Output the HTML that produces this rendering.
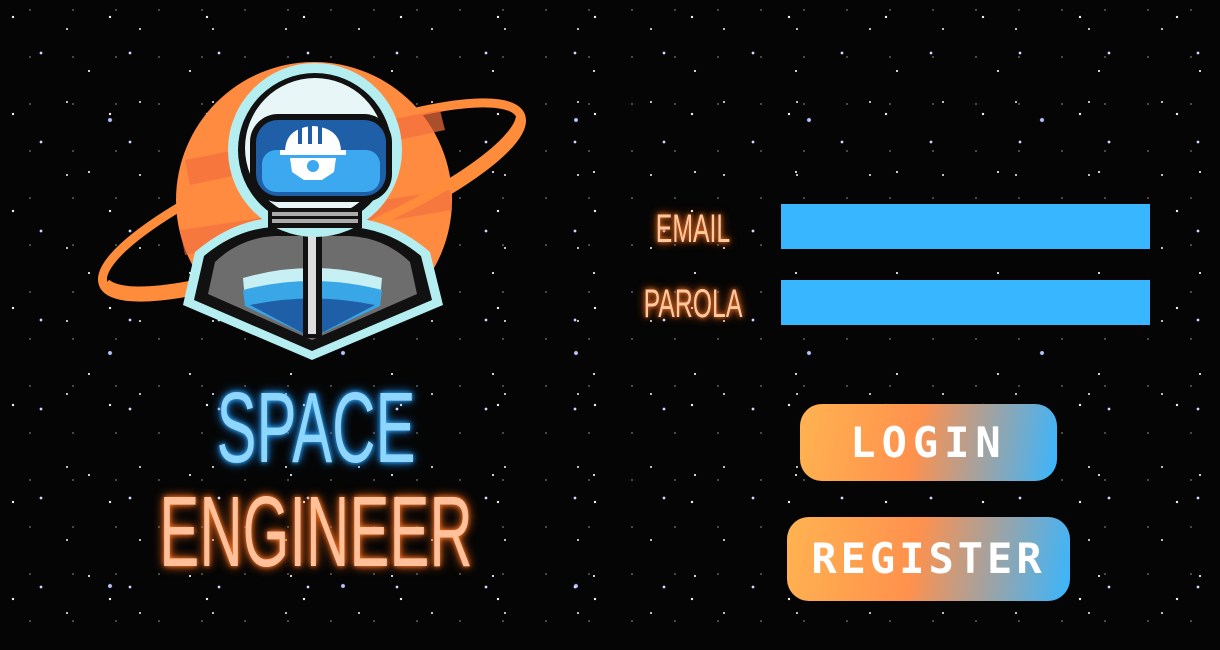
<!DOCTYPE html>
<html><head><style>
html,body{margin:0;padding:0}
body{width:1220px;height:650px;overflow:hidden;position:relative;background:#050505;
background-image:
radial-gradient(circle at 13px 17px,#fff 0.9px,transparent 1.4px),
radial-gradient(circle at 41px 53px,#cfd6ff 1.1px,transparent 1.7px),
radial-gradient(circle at 67px 29px,#fff 0.7px,transparent 1.2px),
radial-gradient(circle at 89px 71px,#e8ecff 0.8px,transparent 1.3px),
radial-gradient(circle at 23px 83px,#ddd 0.6px,transparent 1.1px),
radial-gradient(circle at 110px 120px,#b8c4ff 1.6px,transparent 2.4px),
radial-gradient(circle at 30px 10px,#999 0.5px,transparent 1px);
background-size:97px 97px,89px 89px,73px 73px,101px 101px,61px 61px,233px 233px,43px 47px;}
.lbl{position:absolute;font-family:"Liberation Sans",sans-serif;color:#ffc9a0;font-size:40px;transform:scaleX(.62);transform-origin:center;text-shadow:0 0 6px #ff7a2a,0 0 12px #ff6a1a;white-space:nowrap;text-align:center}
.inp{position:absolute;left:781px;width:369px;height:45px;background:#38b6ff}
.btn{position:absolute;border-radius:22px;background:linear-gradient(100deg,#ffb351 0%,#ff914d 45%,#38b6ff 100%);color:#fff;font-family:"DejaVu Sans Mono","Liberation Mono",monospace;font-weight:bold;text-align:center;letter-spacing:6px}
.big{position:absolute;font-family:"Liberation Sans",sans-serif;font-size:100px;transform:scaleX(.6);white-space:nowrap;text-align:center;width:600px;line-height:1}
</style></head><body>
<svg width="600" height="380" style="position:absolute;left:0;top:0" viewBox="0 0 600 380">
<g transform="rotate(-22 312 200)">
<ellipse cx="312" cy="200" rx="225" ry="52" fill="none" stroke="#ff8c3a" stroke-width="9"/>
</g>
<circle cx="314" cy="200" r="138" fill="#ff8b40"/>
<path d="M185 160 L440 110 L445 130 L190 185Z" fill="#f26d3d" opacity=".7"/>
<path d="M180 230 L450 190 L452 210 L185 255Z" fill="#f26d3d" opacity=".6"/>
<g transform="rotate(-22 312 200)">
<path d="M90 200 A225 52 0 0 0 537 200" fill="none" stroke="#ff8c3a" stroke-width="9"/>
</g>
<path d="M183 305 L195 252 Q230 222 270 218 L355 218 Q395 222 430 252 L443 305 L312 360Z" fill="#b5eef0"/>
<path d="M194 300 L204 256 Q235 230 272 227 L352 227 Q390 230 421 256 L432 300 L312 351Z" fill="#111"/>
<path d="M208 294 L215 262 Q240 238 275 236 L350 236 Q385 238 410 262 L417 294 L312 340Z" fill="#6d6d6d"/>
<path d="M243 278 Q312 258 382 278 L380 300 L312 338 L245 300Z" fill="#c7f0f5"/>
<path d="M243 290 Q312 272 382 290 L380 306 L312 338 L245 306Z" fill="#39a6e6"/>
<path d="M250 305 Q312 292 375 305 L312 338Z" fill="#1e5fa8"/>
<rect x="303" y="218" width="19" height="120" fill="#111"/>
<rect x="308" y="220" width="8" height="114" fill="#ddd"/>
<circle cx="315" cy="150" r="87" fill="#b5eef0"/>
<circle cx="315" cy="150" r="77" fill="#111"/>
<circle cx="315" cy="148" r="70" fill="#e8f6f8"/>
<rect x="268" y="208" width="94" height="20" fill="#111"/>
<rect x="272" y="212" width="86" height="4" fill="#aaa"/>
<rect x="272" y="219" width="86" height="4" fill="#aaa"/>
<rect x="250" y="114" width="142" height="88" rx="28" fill="#111"/>
<rect x="256" y="120" width="130" height="76" rx="22" fill="#1f5fa8"/>
<rect x="262" y="150" width="118" height="42" rx="14" fill="#3ba8ef"/>
<path d="M285 152 Q285 128 313 126 Q341 128 341 152Z" fill="#fff"/>
<rect x="298" y="126" width="4" height="18" fill="#1f5fa8"/><rect x="308" y="126" width="4" height="18" fill="#1f5fa8"/><rect x="318" y="126" width="4" height="18" fill="#1f5fa8"/>
<rect x="280" y="150" width="66" height="5" fill="#fff"/>
<path d="M290 158 L336 158 L334 172 L322 180 L304 180 L292 172Z" fill="#fff"/>
<circle cx="313" cy="166" r="6" fill="#3ba8ef"/>
</svg>
<div class="big" style="left:16px;top:378px;color:#8fd6ff;text-shadow:0 0 6px #38b6ff,0 0 14px #1e90ff">SPACE</div>
<div class="big" style="left:16px;top:482px;color:#ffc09a;text-shadow:0 0 6px #ff7a2a,0 0 14px #ff6a1a">ENGINEER</div>
<div class="lbl" style="left:593px;width:200px;top:207px">EMAIL</div>
<div class="lbl" style="left:593px;width:200px;top:282px">PAROLA</div>
<div class="inp" style="top:204px"></div>
<div class="inp" style="top:280px"></div>
<div class="btn" style="left:800px;top:404px;width:257px;height:77px;line-height:77px;font-size:42px">LOGIN</div>
<div class="btn" style="left:787px;top:517px;width:283px;height:84px;line-height:84px;font-size:42px;letter-spacing:4px">REGISTER</div>
</body></html>
